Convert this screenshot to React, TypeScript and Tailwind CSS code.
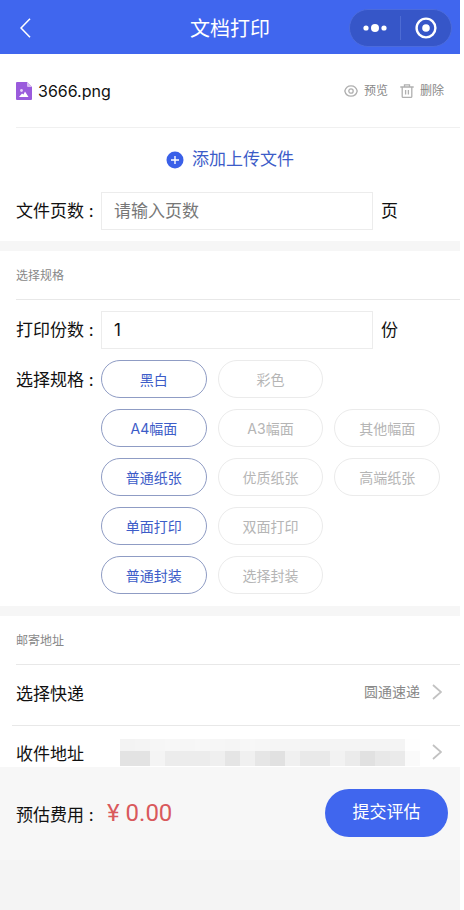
import { useState } from "react";

const SPEC_ROWS = [
  { name: "color", options: ["黑白", "彩色"] },
  { name: "size", options: ["A4幅面", "A3幅面", "其他幅面"] },
  { name: "paper", options: ["普通纸张", "优质纸张", "高端纸张"] },
  { name: "side", options: ["单面打印", "双面打印"] },
  { name: "binding", options: ["普通封装", "选择封装"] },
];

// grey tones of the masked address, one per 15px tile
const MASK_TOP = [
  "#f3f3f3", "#f4f4f4", "#f6f6f6", "#f7f7f7", "#f6f6f6", "#f7f7f7", "#f6f6f6", "#f5f5f5", "#f7f7f7", "#f6f6f6",
  "#f5f5f5", "#f5f5f5", "#f4f4f4", "#f4f4f4", "#f4f4f4", "#f4f4f4", "#f4f4f4", "#f4f4f4", "#f4f4f4", "#fefefe",
];
const MASK_BOTTOM = [
  "#e3e3e3", "#e3e3e3", "#f4f4f4", "#ececec", "#ececec", "#ececec", "#efefef", "#e5e5e5", "#f0f0f0", "#e6e6e6",
  "#e1e1e1", "#f0f0f0", "#e9e9e9", "#e9e9e9", "#f2f2f2", "#ebebeb", "#e1e1e1", "#e8e8e8", "#eaeaea", "#fafafa",
];

function FileIcon() {
  return (
    <svg width="16" height="18" viewBox="0 0 16 18" aria-hidden="true">
      <path d="M1 0h10l5 5v12a1 1 0 0 1-1 1H1a1 1 0 0 1-1-1V1a1 1 0 0 1 1-1z" fill="#9a5bdc" />
      <path d="M11 0l5 5h-4a1 1 0 0 1-1-1z" fill="#d9bdf3" />
      <circle cx="5.5" cy="8.5" r="1.4" fill="#e5d2f8" />
      <path d="M3 15l3-3.500 1.500 1L9 9.500 12.500 15z" fill="#fff" />
    </svg>
  );
}

function EyeIcon() {
  return (
    <svg width="14" height="12" viewBox="0 0 14 12" fill="none" stroke="#b0b0b0" strokeWidth="1.3" aria-hidden="true">
      <path d="M.8 6C1.600 2.600 4 .8 7 .8s5.400 1.800 6.200 5.200C12.400 9.400 10 11.200 7 11.200S1.600 9.400.8 6z" />
      <circle cx="7" cy="6" r="2.200" />
    </svg>
  );
}

function TrashIcon() {
  return (
    <svg width="14" height="14" viewBox="0 0 14 14" fill="none" stroke="#b0b0b0" strokeWidth="1.300" aria-hidden="true">
      <path d="M.3 3h13.400M4.500 3V.8h5V3M2.200 3v9.400a1 1 0 0 0 1 1h7.600a1 1 0 0 0 1-1V3M5.600 6v4.500M8.400 6v4.500" />
    </svg>
  );
}

function ArrowIcon() {
  return (
    <svg width="10" height="16" viewBox="0 0 10 16" fill="none" stroke="#c2c2c2" strokeWidth="1.800" aria-hidden="true">
      <path d="M1 1l8 7-8 7" />
    </svg>
  );
}

function AddressMask() {
  return (
    <svg className="mr-3 shrink-0" width="300" height="27" viewBox="0 0 300 27" shapeRendering="crispEdges" aria-hidden="true">
      {MASK_TOP.map((fill, i) => (
        <rect key={`top-${i}`} x={i * 15} y="0" width="15" height="12" fill={fill} />
      ))}
      {MASK_BOTTOM.map((fill, i) => (
        <rect key={`bottom-${i}`} x={i * 15} y="12" width="15" height="15" fill={fill} />
      ))}
    </svg>
  );
}

interface CountFieldProps {
  id: string;
  label: string;
  unit: string;
  value: string;
  placeholder?: string;
  onChange: (value: string) => void;
}

function CountField({ id, label, unit, value, placeholder, onChange }: CountFieldProps) {
  return (
    <div className="flex items-center pl-4">
      <label htmlFor={id} className="w-[85px] shrink-0 text-[17px] leading-6">
        {label} :
      </label>
      <input
        id={id}
        inputMode="numeric"
        value={value}
        placeholder={placeholder}
        onChange={(e) => onChange(e.target.value)}
        className="h-[38px] min-w-0 flex-1 border border-[#ececec] bg-white px-3 text-[17px] outline-none placeholder:text-[#777]"
      />
      <span className="w-[87px] shrink-0 pl-2 text-[17px] leading-6">{unit}</span>
    </div>
  );
}

function SectionTitle({ children }: { children: string }) {
  return (
    <h2 className="ml-4 flex h-[49px] items-center border-b border-[#e8e8e8] pt-0.5 text-xs font-normal text-[#888]">
      {children}
    </h2>
  );
}

export default function App() {
  const [pages, setPages] = useState("");
  const [copies, setCopies] = useState("1");
  const [specs, setSpecs] = useState<Record<string, string>>({
    color: "黑白",
    size: "A4幅面",
    paper: "普通纸张",
    side: "单面打印",
    binding: "普通封装",
  });

  return (
    <div className="flex h-screen flex-col bg-white pr-1 font-['Inter','Noto_Sans_CJK_SC',sans-serif] text-[#111]">
      <header className="grid h-[54px] shrink-0 grid-cols-[1fr_auto_1fr] items-center bg-[#4066ee] pt-0.5 text-white">
        <button aria-label="返回" className="ml-4 flex h-9 w-9 items-center pl-1">
          <svg width="11" height="20" viewBox="0 0 11 20" fill="none" stroke="#fff" strokeWidth="1.600" aria-hidden="true">
            <path d="M10 .8L1 10l9 9.200" />
          </svg>
        </button>
        <h1 className="pt-0.5 text-xl font-normal">文档打印</h1>
        <div className="mr-2 flex h-[38px] w-[103px] items-center justify-self-end rounded-full border border-[#4b6bdc] bg-[#3656c8]">
          <button aria-label="更多" className="flex flex-1 justify-center">
            <svg width="24" height="8" viewBox="0 0 24 8" fill="#fff" aria-hidden="true">
              <circle cx="3" cy="4" r="2.600" />
              <circle cx="12" cy="4" r="4" />
              <circle cx="21" cy="4" r="2.600" />
            </svg>
          </button>
          <span className="h-6 w-px bg-[#4d6bd3]" />
          <button aria-label="关闭" className="flex flex-1 justify-center">
            <svg width="22" height="22" viewBox="0 0 22 22" aria-hidden="true">
              <circle cx="11" cy="11" r="9.400" fill="none" stroke="#fff" strokeWidth="2.400" />
              <circle cx="11" cy="11" r="3.800" fill="#fff" />
            </svg>
          </button>
        </div>
      </header>

      <main className="min-h-0 flex-1 overflow-y-auto [scrollbar-width:none]">
        {/* Files */}
        <section className="pb-[11px]">
          <div className="ml-4 flex h-[74px] items-center border-b border-[#f0f0f0] pr-4">
            <FileIcon />
            <span className="ml-1.5 flex-1 text-base">3666.png</span>
            <button className="flex items-center gap-1.5 text-xs text-[#888]">
              <EyeIcon />
              预览
            </button>
            <button className="ml-3 flex items-center gap-1.5 text-xs text-[#888]">
              <TrashIcon />
              删除
            </button>
          </div>
          <div className="flex h-16 items-center justify-center">
            <button className="flex items-center gap-2 text-[17px] text-[#3c5cc8]">
              <svg width="18" height="18" viewBox="0 0 18 18" aria-hidden="true">
                <circle cx="9" cy="9" r="8.500" fill="#3a60e8" />
                <path d="M9 5v8M5 9h8" stroke="#fff" strokeWidth="1.400" />
              </svg>
              添加上传文件
            </button>
          </div>
          <CountField id="pages" label="文件页数" unit="页" placeholder="请输入页数" value={pages} onChange={setPages} />
        </section>

        {/* Print options */}
        <section className="border-t-[10px] border-[#f6f6f6] pb-3">
          <SectionTitle>选择规格</SectionTitle>
          <div className="mt-[11px]">
            <CountField id="copies" label="打印份数" unit="份" value={copies} onChange={setCopies} />
          </div>
          <div className="mt-[11px] flex pl-4">
            <span className="w-[85px] shrink-0 pt-2 text-[17px] leading-6">选择规格 :</span>
            <div className="flex min-w-0 flex-1 flex-col gap-[11px]">
              {SPEC_ROWS.map((row) => (
                <div key={row.name} className="grid grid-cols-3 gap-[11px] pr-5">
                  {row.options.map((option) => {
                    const active = specs[row.name] === option;
                    return (
                      <button
                        key={option}
                        aria-pressed={active}
                        onClick={() => setSpecs({ ...specs, [row.name]: option })}
                        className={`h-[38px] rounded-full border pt-0.5 text-sm ${
                          active ? "border-[#8f9cc4] text-[#3c5cc8]" : "border-[#ebebeb] text-[#b5b5b5]"
                        }`}
                      >
                        {option}
                      </button>
                    );
                  })}
                </div>
              ))}
            </div>
          </div>
        </section>

        {/* Delivery */}
        <section className="border-t-[10px] border-[#f6f6f6]">
          <SectionTitle>邮寄地址</SectionTitle>
          <button className="flex h-[60px] w-full items-center pr-[18px] pb-1.5 pl-4 text-left">
            <span className="flex-1 pt-1.5 text-[17px]">选择快递</span>
            <span className="mr-3 text-sm text-[#888]">圆通速递</span>
            <ArrowIcon />
          </button>
          <div className="ml-3 border-t border-[#e8e8e8]">
            <button className="flex h-[58px] w-full items-center pr-[18px] pb-1.5 pl-1 text-left">
              <span className="flex-1 pt-1.5 text-[17px]">收件地址</span>
              <AddressMask />
              <ArrowIcon />
            </button>
          </div>
        </section>
      </main>

      <footer className="shrink-0 bg-[#f4f4f4] pb-[50px]">
        <div className="flex h-[93px] items-center bg-[#f7f7f7] pr-3 pb-0.5 pl-4">
          <span className="w-[85px] pt-1.5 text-[17px]">预估费用 :</span>
          <span className="ml-1.5 flex-1 font-['Roboto','Noto_Sans_CJK_SC',sans-serif] text-2xl text-[#d9595c]">
            ¥ 0.00
          </span>
          <button className="h-12 w-[123px] rounded-full bg-[#4066ee] text-[17px] text-white">提交评估</button>
        </div>
      </footer>
    </div>
  );
}
